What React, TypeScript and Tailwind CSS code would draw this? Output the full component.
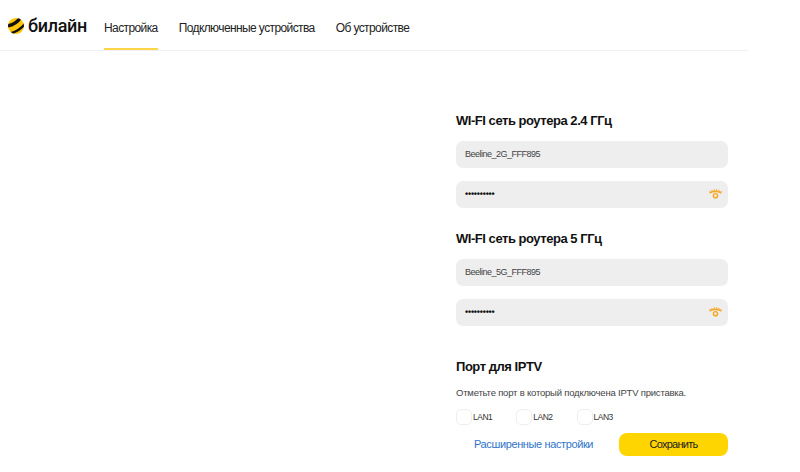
import React from 'react';

const font = { fontFamily: '"Liberation Sans", Arial, sans-serif' };

const BeeLogo = () => (
  <svg width="16" height="16" viewBox="0 0 16 16" className="shrink-0">
    <defs>
      <clipPath id="bee">
        <circle cx="8" cy="8" r="8" />
      </clipPath>
    </defs>
    <circle cx="8" cy="8" r="8" fill="#fdc60a" />
    <g clipPath="url(#bee)" fill="none" stroke="#111" strokeLinecap="round">
      <path d="M-1 8 C3 7.5 9 5 13 -1" strokeWidth="3.4" />
      <path d="M2 15.5 C8 14 13 11 17 6" strokeWidth="2.6" />
    </g>
  </svg>
);

const EyeIcon = () => (
  <svg width="13" height="10" viewBox="0 0 14 11" fill="none" stroke="#f5a623" strokeWidth="1.6" strokeLinecap="round" className="-translate-y-[1px]">
    <path d="M1 4.2 C3.5 2.4 10.5 2.4 13 4.2" />
    <circle cx="7" cy="7.4" r="2.3" />
    <path d="M3 1.4 L3.6 2.8 M5.6 0.6 L5.8 2.2 M8.4 0.6 L8.2 2.2 M11 1.4 L10.4 2.8 M0.4 2.4 L1.6 3.6 M13.6 2.4 L12.4 3.6" strokeWidth="1.1" />
  </svg>
);

const TextField = ({ value, secret }: { value: string; secret?: boolean }) => (
  <div className="h-[27px] w-full rounded-[7px] bg-[#eeeeee] pl-[9px] pr-[6px] flex items-center justify-between text-[9px] tracking-[-0.5px] text-[#444]">
    {secret ? <span className="text-[#111] text-[9px] font-bold tracking-[-0.2px]">{value}</span> : <span className="-translate-y-[0.5px]">{value}</span>}
    {secret && <EyeIcon />}
  </div>
);

const Lan = ({ label }: { label: string }) => (
  <label className="flex items-center w-[60.25px] text-[8.5px] tracking-[-0.5px] text-[#333]">
    <span className="w-4 h-4 rounded-[5px] border border-[#eeeeee] bg-white mr-[1px]" />
    {label}
  </label>
);

const App: React.FC = () => {
  const tabs = ['Настройка', 'Подключенные устройства', 'Об устройстве'];

  return (
    <div className="w-[800px] h-[472px] bg-white overflow-hidden text-[#111]" style={font}>
      <header className="w-[748px] h-[51px] border-b border-[#f1f1f1] flex items-stretch">
        <div className="flex items-center pl-2 pt-[2px] w-[104px]">
          <BeeLogo />
          <span className="ml-1 text-[18px] tracking-[-0.3px] font-medium text-[#111] leading-none" style={{ fontFamily: 'Roboto, sans-serif' }}>билайн</span>
        </div>
        <nav className="flex gap-[21px]">
          {tabs.map((tab, i) => (
            <a key={tab} className={`flex items-center pt-[7px] text-[12px] tracking-[-0.6px] text-[#222] border-b-2 ${i === 0 ? 'border-[#fdd549]' : 'border-transparent'}`}>
              {tab}
            </a>
          ))}
        </nav>
      </header>

      <main className="flex justify-end pr-[72px]">
        <div className="w-[272px] pt-[61px]">
          <h2 className="text-[13px] tracking-[-0.46px] font-bold leading-[18px] text-[#111]">WI-FI сеть роутера 2.4 ГГц</h2>
          <div className="mt-[11px] flex flex-col gap-[13px]">
            <TextField value="Beeline_2G_FFF895" />
            <TextField value="••••••••••" secret />
          </div>
          <h2 className="mt-[22px] text-[13px] tracking-[-0.46px] font-bold leading-[18px] text-[#111]">WI-FI сеть роутера 5 ГГц</h2>
          <div className="mt-[11px] flex flex-col gap-[13px]">
            <TextField value="Beeline_5G_FFF895" />
            <TextField value="••••••••••" secret />
          </div>
          <h2 className="mt-[32px] text-[13px] tracking-[-0.46px] font-bold leading-[18px] text-[#111]">Порт для IPTV</h2>
          <p className="mt-[10px] text-[9.5px] tracking-[-0.2px] leading-[14px] text-[#444]">Отметьте порт в который подключена IPTV приставка.</p>
          <div className="mt-[9px] flex">
            <Lan label="LAN1" />
            <Lan label="LAN2" />
            <Lan label="LAN3" />
          </div>
          <div className="mt-[8px] flex items-center justify-between">
            <a className="ml-[18px] text-[11px] tracking-[-0.38px] text-[#2f74c9]">Расширенные настройки</a>
            <button className="w-[109px] h-[23px] rounded-[8px] bg-[#ffd500] text-[11px] tracking-[-0.75px] text-[#222]">Сохранить</button>
          </div>
        </div>
      </main>
    </div>
  );
};

export default App;
